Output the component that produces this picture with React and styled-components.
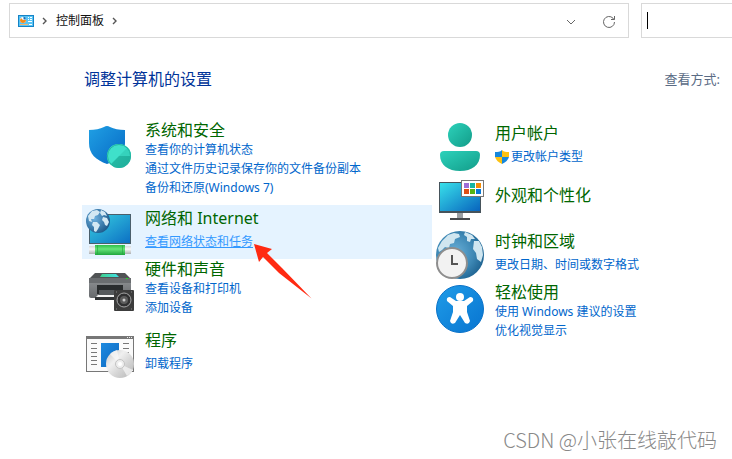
import styled, { createGlobalStyle } from 'styled-components';

const GlobalStyle = createGlobalStyle`
    * {
        box-sizing: border-box;
    }
    body {
        margin: 0;
        background: white;
        font-family: "Noto Sans", "Noto Sans CJK SC", sans-serif;
        font-size: 12px;
        overflow-x: hidden;
    }
`
const Container = styled.div`
    position: relative;
    min-height: 100vh;
`
const TopBar = styled.header`
    display: flex;
    gap: 12px;
    padding: 3px 0 0 9px;
`
const Address = styled.nav`
    flex: 1;
    display: flex;
    align-items: center;
    gap: 8px;
    height: 35px;
    padding: 0 10px 0 8px;
    border: 1px solid #d9d9d9;
`
const Crumb = styled.a`
    line-height: 20px;
    color: #111;
    text-decoration: none;
`
const Actions = styled.div`
    display: flex;
    gap: 20px;
    margin-left: auto;
    padding-top: 2px;
`
const BarButton = styled.button`
    display: flex;
    align-items: center;
    justify-content: center;
    width: 18px;
    height: 24px;
    padding: 0;
    border: 0;
    background: none;
    color: #666;
`
const Search = styled.label`
    display: flex;
    align-items: center;
    width: 91px;
    height: 35px;
    padding-left: 5px;
    border: 1px solid #d9d9d9;
    border-right: 0;
`
const Caret = styled.span`
    width: 1px;
    height: 17px;
    background: black;
`
const SearchInput = styled.input`
    flex: 1;
    min-width: 0;
    border: 0;
    outline: 0;
    background: none;
    font: inherit;
`
const Heading = styled.div`
    display: flex;
    align-items: center;
    justify-content: space-between;
    padding: 29px 12px 0 84px;
`
const Title = styled.h1`
    margin: 0;
    font-size: 16px;
    font-weight: 400;
    line-height: 24px;
    color: #003399;
`
const ViewBy = styled.span`
    font-size: 13px;
    line-height: 20px;
    color: #5a6b85;
`
const Columns = styled.main`
    display: grid;
    grid-template-columns: 350px 1fr;
    padding: 29px 0 0 82px;
`
const Column = styled.div`
    display: flex;
    flex-direction: column;
`
const Item = styled.section`
    position: relative;
    display: flex;
    gap: 11px;
    min-height: 54px;
    padding-left: 4px;
    padding-bottom: ${props => props.$space || 0}px;
    background: ${props => props.$active ? "#e5f3ff" : "none"};
`
const Icon = styled.svg`
    flex: none;
    width: 48px;
    height: 54px;
`
const Info = styled.div`
    display: flex;
    flex-direction: column;
    align-items: flex-start;
    gap: ${props => props.$count === 1 ? 4 : 0}px;
    padding-top: ${props => [11, 3, 0][Math.min(props.$count, 2)]}px;
`
const Name = styled.h2`
    margin: 0;
    font-size: 16px;
    font-weight: 400;
    line-height: 20px;
    color: #006600;
`
const Links = styled.ul`
    margin: 0;
    padding: 0;
    list-style: none;
`
const LinkItem = styled.li`
    display: flex;
    align-items: center;
    gap: 2px;
    line-height: 19px;
`
const Link = styled.a`
    color: ${props => props.$active ? "#3399ff" : "#0066cc"};
    text-decoration: ${props => props.$active ? "underline" : "none"};
`
const Arrow = styled.svg`
    position: absolute;
    left: 170px;
    top: 36px;
    width: 64px;
    height: 62px;
    z-index: 1;
    pointer-events: none;
`
const Watermark = styled.div`
    position: absolute;
    right: 15px;
    bottom: 6px;
    font-family: "Noto Sans CJK SC", sans-serif;
    font-size: 20px;
    font-weight: 300;
    line-height: 26px;
    color: #888;
`

const PanelLogo = () => (
    <svg width="16" height="12" viewBox="0 0 16 12">
        <rect width="16" height="12" fill="#1583c6" />
        <rect x="1" y="1" width="14" height="10" fill="#58c4f5" />
        <circle cx="5" cy="5" r="3" fill="#fff" />
        <path d="M5.500 4.500V1.500a3 3 0 0 1 2.500 3z" fill="#1670b8" />
        <path d="M5 5h3a3 3 0 0 1-6 0l1-2z" fill="#f58b1c" />
        <path d="M10 2.500h1M12 2.500h2M10 4.500h1M12 4.500h2M10 6.500h4" stroke="#fff" />
        <path d="M2 9.500h8" stroke="#f8b46a" />
        <path d="M11 9.500h3" stroke="#fff" />
    </svg>
)

const Chevron = () => (
    <svg width="6" height="8" viewBox="0 0 6 8">
        <path d="M1 1l3 3-3 3" fill="none" stroke="#555" strokeWidth="1.4" />
    </svg>
)

const ShieldIcon = () => (
    <Icon viewBox="0 0 48 54">
        <defs>
            <linearGradient id="shield" x1="0" y1="0" x2="1" y2="1">
                <stop offset="0" stopColor="#20a0e4" />
                <stop offset="1" stopColor="#0668c4" />
            </linearGradient>
            <linearGradient id="pie" x1="0" y1="0" x2="1" y2="1">
                <stop offset="0" stopColor="#2cc4ae" />
                <stop offset="1" stopColor="#1dac99" />
            </linearGradient>
        </defs>
        <path d="M3 10c6 0 11-1 15-3q3-2 6 0c4 2 9 3 15 3v13c0 11-7 17-18 21C10 40 3 34 3 23z" fill="url(#shield)" />
        <circle cx="33" cy="36" r="12" fill="url(#pie)" />
        <path d="M33 36L24.500 44.500A12 12 0 0 1 33 24a12 12 0 0 1 12 12z" fill="#3fe0ca" />
        <path d="M33 36h12a12 12 0 0 0-3.500-8.500z" fill="#35d2bc" />
        <circle cx="33" cy="36" r="11.500" fill="none" stroke="#22b5a1" />
    </Icon>
)

const NetworkIcon = () => (
    <Icon viewBox="0 0 48 54">
        <defs>
            <linearGradient id="netScreen" x1="0" y1="0" x2="1" y2="1">
                <stop offset="0" stopColor="#38cfe0" />
                <stop offset="1" stopColor="#0c70c4" />
            </linearGradient>
            <radialGradient id="netGlobe" cx=".35" cy=".4" r=".7">
                <stop offset="0" stopColor="#6fb2e0" />
                <stop offset="1" stopColor="#1a5687" />
            </radialGradient>
            <linearGradient id="cable" x1="0" y1="0" x2="0" y2="1">
                <stop offset="0" stopColor="#2fbf4a" />
                <stop offset=".4" stopColor="#66e47a" />
                <stop offset="1" stopColor="#20a63d" />
            </linearGradient>
            <linearGradient id="plug" x1="0" y1="0" x2="0" y2="1">
                <stop offset="0" stopColor="#d8dadb" />
                <stop offset=".4" stopColor="#f6f6f6" />
                <stop offset="1" stopColor="#aeb2b4" />
            </linearGradient>
        </defs>
        <rect x="3" y="9" width="42" height="30" fill="#4b5f6b" />
        <rect x="4" y="10" width="40" height="28" fill="url(#netScreen)" />
        <circle cx="12" cy="16" r="12" fill="url(#netGlobe)" />
        <path d="M2 11l4-5 5-1 3 2-2 3-3 1-1 3-3 0 1 3-3-1zM7 17l4 0 3 3-2 4-2 3-2-1 0-4-2-2zM15 5l4 2 2 4-3-1-2 1-2-3zM17 12l4 1 2 4-2 4-2-1-1-3-2-2z" fill="#d3e8f3" />
        <rect x="3" y="41" width="42" height="8" fill="url(#plug)" />
        <rect x="9" y="40" width="30" height="10" fill="url(#cable)" />
        <path d="M11.500 40v10M36.500 40v10" stroke="#25a53f" opacity=".6" />
    </Icon>
)

const PrinterIcon = () => (
    <Icon viewBox="0 0 48 54">
        <defs>
            <linearGradient id="printer" x1="0" y1="0" x2="0" y2="1">
                <stop offset="0" stopColor="#8e9194" />
                <stop offset="1" stopColor="#66696c" />
            </linearGradient>
            <linearGradient id="glass" x1="0" y1="0" x2="1" y2="0">
                <stop offset="0" stopColor="#3fd08c" />
                <stop offset="1" stopColor="#3fe0e6" />
            </linearGradient>
        </defs>
        <path d="M9 14h30l6 6H3z" fill="#505355" />
        <path d="M16 15h14l3 3H14z" fill="url(#glass)" />
        <path d="M3 20h42v17q0 2-2 2H5q-2 0-2-2z" fill="url(#printer)" />
        <rect x="3" y="19" width="42" height="5" fill="#6a6d70" />
        <rect x="40" y="19" width="2" height="1" fill="#20e020" />
        <path d="M11 26h26v9H11z" fill="#292c2e" />
        <path d="M13 31h22v5H13z" fill="#55595c" />
        <path d="M12 36h20l-1 3H9z" fill="#f2f2f2" />
        <path d="M9 38h20v3H9z" fill="#303335" />
        <rect x="28" y="31" width="20" height="21" rx="1" fill="#3c3c3c" />
        <path d="M30 33h1M45 33h1M30 50h1M45 50h1" stroke="#888" />
        <circle cx="38" cy="41" r="7" fill="#303031" stroke="#a5a5a5" />
        <circle cx="38" cy="41" r="4" fill="#5c5c5c" />
        <circle cx="38" cy="41" r="1.500" fill="#ccc" />
    </Icon>
)

const ProgramsIcon = () => (
    <Icon viewBox="0 0 48 54">
        <defs>
            <linearGradient id="disc" x1="0" y1="0" x2="1" y2="1">
                <stop offset="0" stopColor="#c4c4c4" />
                <stop offset=".35" stopColor="#f0f0f0" />
                <stop offset=".6" stopColor="#d6d6d6" />
                <stop offset="1" stopColor="#b4b4b4" />
            </linearGradient>
            <linearGradient id="page" x1="0" y1="0" x2="1" y2="1">
                <stop offset="0" stopColor="#1c8ae0" />
                <stop offset="1" stopColor="#0e68c0" />
            </linearGradient>
        </defs>
        <rect x=".5" y="9.500" width="47" height="35" fill="#fafafa" stroke="#777" />
        <rect x="0" y="9" width="48" height="3" fill="#777" />
        <path d="M41 10.500h1M43 10.500h1M45 10.500h1" stroke="#eee" />
        <path d="M5 16.500h6M5 21.500h6M5 25.500h6M5 29.500h6M5 33.500h6M5 37.500h6M37 16.500h6M37 21.500h6M37 25.500h6" stroke="#777" />
        <rect x="15" y="16" width="18" height="24" fill="url(#page)" />
        <circle cx="34" cy="37" r="14" fill="url(#disc)" />
        <path d="M34 37L24 27a14 14 0 0 1 7-4zM34 37l7 12a14 14 0 0 0 6-6z" fill="#f8f8f8" opacity=".7" />
        <circle cx="34" cy="37" r="4.500" fill="#eee" stroke="#c3c3c3" />
        <circle cx="34" cy="37" r="2" fill="#fff" />
    </Icon>
)

const UserIcon = () => (
    <Icon viewBox="0 0 48 54">
        <defs>
            <linearGradient id="user" x1="0" y1="0" x2="1" y2="1">
                <stop offset="0" stopColor="#2dd2bb" />
                <stop offset="1" stopColor="#129c89" />
            </linearGradient>
        </defs>
        <circle cx="24" cy="15" r="12" fill="url(#user)" />
        <path d="M8 31h32q4 0 4 4c0 10-8 16-20 16S4 45 4 35q0-4 4-4z" fill="url(#user)" />
    </Icon>
)

const MonitorIcon = () => (
    <Icon viewBox="0 0 48 54">
        <defs>
            <linearGradient id="monitor" x1="0" y1="0" x2="1" y2="1">
                <stop offset="0" stopColor="#38e0ea" />
                <stop offset="1" stopColor="#0864be" />
            </linearGradient>
        </defs>
        <rect x="3" y="8" width="42" height="31" fill="#46535b" />
        <rect x="4" y="9" width="40" height="28" fill="url(#monitor)" />
        <rect x="21" y="39" width="6" height="5" fill="#9aa0a5" />
        <rect x="14" y="44" width="20" height="2" fill="#45494d" />
        <rect x="25.500" y="6.500" width="22" height="16" fill="#fff" stroke="#777" />
        <rect x="28" y="9" width="5" height="5" fill="#9e6dd8" />
        <rect x="34" y="9" width="5" height="5" fill="#16b5a1" />
        <rect x="40" y="9" width="5" height="5" fill="#f58c05" />
        <rect x="28" y="15" width="5" height="5" fill="#df4f15" />
        <rect x="34" y="15" width="5" height="5" fill="#55b516" />
        <rect x="40" y="15" width="5" height="5" fill="#0878d4" />
    </Icon>
)

const ClockIcon = () => (
    <Icon viewBox="0 0 48 54">
        <defs>
            <radialGradient id="globe" cx=".4" cy=".45" r=".65">
                <stop offset="0" stopColor="#69b0d8" />
                <stop offset=".6" stopColor="#3d87b4" />
                <stop offset="1" stopColor="#1b5f8d" />
            </radialGradient>
        </defs>
        <circle cx="24" cy="27" r="24" fill="url(#globe)" />
        <path d="M2 20l4-7 6-6 6-2 5 1 1 3-5 2-1 4-4 1-1 4-4-1-3 3-3 2zM29 4l7 3 3 4-4 0-1 3-3-1 0-4-3-2zM38 13l5 0 3 6 1 8-2 7-4-3-1-6-3-4z" fill="#d0e6f0" />
        <circle cx="16" cy="35" r="15" fill="#f2f2f2" stroke="#8e8e8e" strokeWidth="2" />
        <path d="M16 27v9h6" fill="none" stroke="#555" strokeWidth="2" />
    </Icon>
)

const EaseIcon = () => (
    <Icon viewBox="0 0 48 54">
        <defs>
            <linearGradient id="ease" x1="0" y1="0" x2="1" y2="1">
                <stop offset="0" stopColor="#1f9ce8" />
                <stop offset="1" stopColor="#0874d0" />
            </linearGradient>
        </defs>
        <circle cx="24" cy="27" r="23.500" fill="url(#ease)" stroke="#0a72c8" />
        <circle cx="24" cy="15" r="4" fill="white" />
        <path d="M14 15L20 19H28L34 15Q38 15 37 19L31 24V30L34 39Q33 43 29 41L24 33L19 41Q15 43 14 39L17 30V24L11 19Q10 15 14 15z" fill="white" />
    </Icon>
)

const Uac = () => (
    <svg width="14" height="14" viewBox="0 0 14 14">
        <path d="M7 0C5 2 3 2 0 2v5h7z" fill="#1687dc" />
        <path d="M7 0c2 2 4 2 7 2v5H7z" fill="#fbc112" />
        <path d="M0 7h7v7C3 12 1 10 0 7z" fill="#fbc112" />
        <path d="M14 7H7v7c4-2 6-4 7-7z" fill="#1687dc" />
    </svg>
)

const left = [
    { name: "系统和安全", icon: ShieldIcon, space: 8, links: ["查看你的计算机状态", "通过文件历史记录保存你的文件备份副本", "备份和还原(Windows 7)"] },
    { name: "网络和 Internet", icon: NetworkIcon, active: true, links: ["查看网络状态和任务"] },
    { name: "硬件和声音", icon: PrinterIcon, space: 10, links: ["查看设备和打印机", "添加设备"] },
    { name: "程序", icon: ProgramsIcon, links: ["卸载程序"] },
]

const right = [
    { name: "用户帐户", icon: UserIcon, shield: true, links: ["更改帐户类型"] },
    { name: "外观和个性化", icon: MonitorIcon, links: [] },
    { name: "时钟和区域", icon: ClockIcon, links: ["更改日期、时间或数字格式"] },
    { name: "轻松使用", icon: EaseIcon, links: ["使用 Windows 建议的设置", "优化视觉显示"] },
]

const Category = ({ item }) => {
    const Picture = item.icon;
    return (
        <Item $active={item.active} $space={item.space}>
            <Picture />
            <Info $count={item.links.length}>
                <Name>{item.name}</Name>
                {item.links.length > 0 && (
                    <Links>
                        {item.links.map(link => (
                            <LinkItem key={link}>
                                {item.shield && <Uac />}
                                <Link href="#" $active={item.active}>{link}</Link>
                            </LinkItem>
                        ))}
                    </Links>
                )}
            </Info>
            {item.active && (
                <Arrow viewBox="0 0 64 62">
                    <path d="M2 3L20 8L15 12L30 27L59.500 57.500L27 32L11 16L7 21z" fill="#ff2a12" />
                </Arrow>
            )}
        </Item>
    );
};

const App = () => {
    return (
        <Container>
            <GlobalStyle />
            <TopBar>
                <Address>
                    <PanelLogo />
                    <Chevron />
                    <Crumb href="#">控制面板</Crumb>
                    <Chevron />
                    <Actions>
                        <BarButton aria-label="展开">
                            <svg width="10" height="6" viewBox="0 0 10 6">
                                <path d="M1 1l4 4 4-4" fill="none" stroke="currentColor" />
                            </svg>
                        </BarButton>
                        <BarButton aria-label="刷新">
                            <svg width="14" height="14" viewBox="0 0 14 14">
                                <path d="M12.500 7A5.500 5.500 0 1 1 11 3.200L12 4.500M12.500 1v3.500H9" fill="none" stroke="currentColor" />
                            </svg>
                        </BarButton>
                    </Actions>
                </Address>
                <Search>
                    <Caret />
                    <SearchInput type="text" aria-label="搜索" />
                </Search>
            </TopBar>
            <Heading>
                <Title>调整计算机的设置</Title>
                <ViewBy>查看方式:</ViewBy>
            </Heading>
            <Columns>
                <Column>
                    {left.map(item => <Category key={item.name} item={item} />)}
                </Column>
                <Column>
                    {right.map(item => <Category key={item.name} item={item} />)}
                </Column>
            </Columns>
            <Watermark>CSDN @小张在线敲代码</Watermark>
        </Container>
    );
};

export default App;
